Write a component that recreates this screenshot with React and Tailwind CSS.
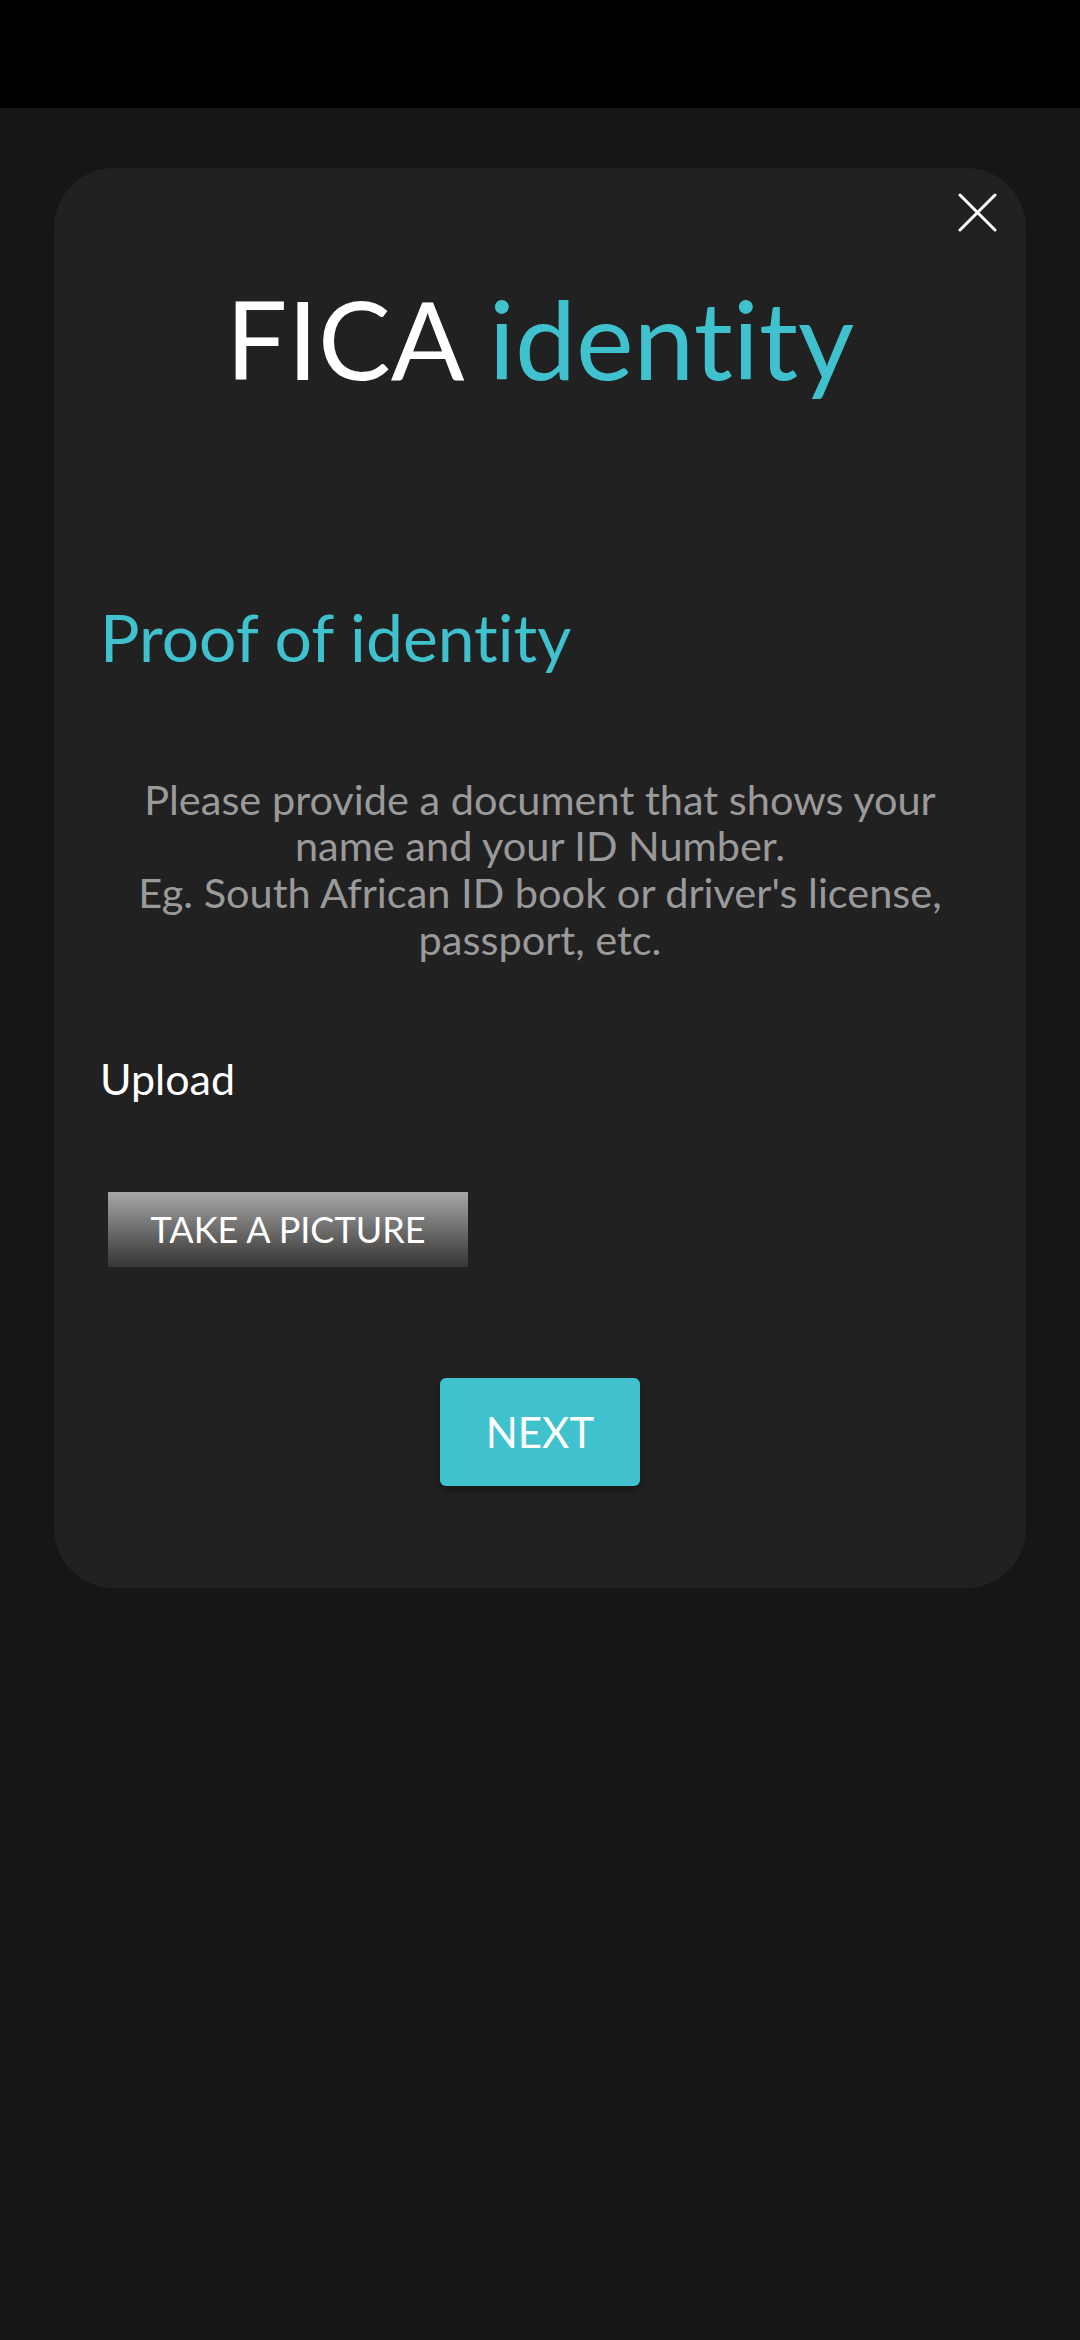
import React from "react";

const font = { fontFamily: "Lato, 'Open Sans', sans-serif" };

export default function App() {
  return (
    <div className="min-h-[2340px] w-[1080px] bg-[#161616] [font-variant-ligatures:no-common-ligatures]" style={font}>
      <div className="h-[108px] bg-black" />

      <div className="relative mx-[54px] mt-[60px] rounded-[60px] bg-[#222122] px-[46px] pt-[105px] pb-[102px]">
        <button className="absolute right-[29px] top-[25px] p-0 text-white" aria-label="Close">
          <svg width="39" height="39" viewBox="0 0 39 39" fill="none">
            <path d="M2 2L37 37M37 2L2 37" stroke="#fff" strokeWidth="3" strokeLinecap="round" />
          </svg>
        </button>

        <h1 className="text-center text-[109px] font-normal leading-[129.6px] text-white">
          FICA <span className="text-[#40c2ce]">identity</span>
        </h1>

        <h2 className="mt-[194px] text-[66px] font-normal leading-[1.2] text-[#40c2ce]">Proof of identity</h2>

        <p className="mx-auto mt-[100px] w-[850px] text-center text-[41.5px] leading-[46.7px] text-[#9a9a9a]">
          Please provide a document that shows your name and your ID Number.
          <br />
          Eg. South African ID book or driver's license, passport, etc.
        </p>

        <div className="mt-[90px] text-[43px] leading-[1.2] text-white">Upload</div>

        <button className="ml-[8px] mt-[88px] flex h-[75px] w-[360px] items-center justify-center bg-gradient-to-b from-[#a8a8a8] to-[#383736] text-[36px] leading-[1.2] text-white">
          TAKE A PICTURE
        </button>

        <div className="mt-[111px] flex justify-center">
          <button className="flex h-[108px] w-[200px] items-center justify-center rounded-[6px] bg-[#40c2ce] text-[42px] leading-[1.2] text-white shadow-[0_4px_6px_rgba(0,0,0,0.35)]">
            NEXT
          </button>
        </div>
      </div>
    </div>
  );
}
